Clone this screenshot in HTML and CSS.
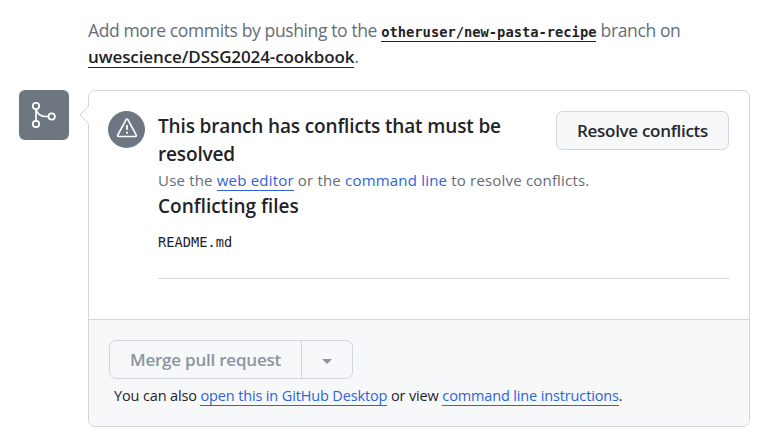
FILE: index.html
```html
<!DOCTYPE html>
<html lang="en">
<head>
<meta charset="utf-8">
<title>Pull request conflicts</title>
<link rel="stylesheet" href="styles.css">
</head>
<body>
<main class="page">
  <p class="intro">Add more commits by pushing to the <a class="branch">otheruser/new-pasta-recipe</a> branch on<br><a class="repo">uwescience/DSSG2024-cookbook</a>.</p>
  <div class="timeline">
    <div class="badge">
      <svg width="26" height="28" viewBox="0 0 26 28" fill="none" stroke="currentColor" stroke-width="1.7"><circle cx="5" cy="5" r="3.200"/><circle cx="5" cy="23" r="3.200"/><circle cx="20.700" cy="15.500" r="3.200"/><path d="M5 8.200v11.600M5 8.200c1.500 5 5.500 7.300 9.500 7.300h3"/></svg>
    </div>
    <section class="box">
      <svg class="caret" width="10" height="18" viewBox="0 0 10 18"><path d="M10 0v18L1 9z" fill="#fff"/><path d="M9.500.5 1 9l8.500 8.500" fill="none" stroke="#d0d7de"/></svg>
      <div class="status">
        <div class="alert-icon">
          <svg width="22" height="20" viewBox="0 0 22 20" fill="none" stroke="currentColor" stroke-width="1.600" stroke-linejoin="round"><path d="M10.100 1.700 1.800 17q-.7 1.500.8 1.500h16.800q1.500 0 .8-1.500L11.900 1.700q-.9-1.300-1.800 0Z"/><path d="M11 7v4.800M11 13.700v2" stroke-width="1.800"/></svg>
        </div>
        <div class="details">
          <div class="summary">
            <h3>This branch has conflicts that must be<br>resolved</h3>
            <button class="btn">Resolve conflicts</button>
          </div>
          <p class="hint">Use the <a class="link underlined">web editor</a> or the <a class="link">command line</a> to resolve conflicts.</p>
          <h3 class="files-title">Conflicting files</h3>
          <div class="file">README.md</div>
        </div>
      </div>
      <footer class="actions">
        <div class="merge-group">
          <button class="merge" disabled>Merge pull request</button>
          <button class="more" disabled><i class="arrow"></i></button>
        </div>
        <p class="note">You can also <a class="link underlined">open this in GitHub Desktop</a> or view <a class="link underlined">command line instructions</a>.</p>
      </footer>
    </section>
  </div>
</main>
</body>
</html>
```

FILE: styles.css
```css
* { box-sizing: border-box; }
body { margin: 0; background: #fff; color: #1f2328; font-family: "Open Sans", "Noto Sans", sans-serif; }
p, h3 { margin: 0; }
.page { width: 764px; height: 444px; padding: 17px 14px 0 19px; }
.intro { height: 73px; margin-left: 69px; font-size: 17.5px; line-height: 26px; letter-spacing: -0.38px; color: #656d76; white-space: nowrap; }
.branch { font: bold 13.75px/20px "DejaVu Sans Mono", monospace; letter-spacing: 0; color: #1f2328; padding-bottom: 1px; border-bottom: 1px solid #1f2328; }
.repo { font-size: 17px; font-weight: 600; letter-spacing: -0.1px; color: #1f2328; box-shadow: inset 0 -1px #1f2328; }
.timeline { display: flex; gap: 19px; }
.badge { display: grid; place-items: center; width: 50px; height: 50px; border-radius: 6px; background: #6e7781; color: #fff; }
.box { position: relative; flex: 1; height: 337px; border: 1px solid #d0d7de; border-radius: 7px; }
.caret { position: absolute; left: -10px; top: 15px; }
.status { display: flex; gap: 13px; height: 228px; padding: 20px 20px 0 19px; }
.alert-icon { display: grid; place-items: center; width: 37px; height: 37px; padding-bottom: 3px; border-radius: 50%; background: #6e7781; color: #fff; }
.details { flex: 1; height: 168px; border-bottom: 1px solid #d0d7de; white-space: nowrap; }
.summary { display: flex; justify-content: space-between; height: 57px; }
h3 { font-size: 19px; line-height: 28px; font-weight: 600; letter-spacing: -0.15px; }
.summary h3 { padding-top: 1px; }
.files-title { letter-spacing: 0; }
button { padding: 0; font-family: inherit; font-size: 17px; }
.btn { width: 173px; height: 39px; border: 1px solid #d0d7de; border-radius: 7px; background: #f6f8fa; color: #24292f; font-weight: 600; letter-spacing: -0.3px; }
.hint { font-size: 15px; line-height: 24px; letter-spacing: 0.19px; color: #656d76; }
.link { color: #2f62d9; }
.underlined { border-bottom: 1px solid #2f62d9; }
.file { margin-top: 12px; font: 13.7px/20px "DejaVu Sans Mono", monospace; }
.actions { height: 107px; padding: 20px; border-top: 1px solid #d0d7de; border-radius: 0 0 6px 6px; background: #f6f8fa; }
.merge-group { display: flex; width: 244px; height: 39px; border: 1px solid #d0d7de; border-radius: 7px; }
.merge-group button { border: 0; background: none; color: #8c959f; font-weight: 600; letter-spacing: -0.22px; }
.merge-group .merge { width: 191px; }
.merge-group .more { flex: 1; display: grid; place-items: center; border-left: 1px solid #d0d7de; }
.arrow { border: 5px solid transparent; border-top-color: #8c959f; border-bottom: 0; margin-top: 3px; }
.note { margin: 5px 0 0 5px; font-size: 14.5px; line-height: 24px; letter-spacing: -0.14px; white-space: nowrap; }
```
